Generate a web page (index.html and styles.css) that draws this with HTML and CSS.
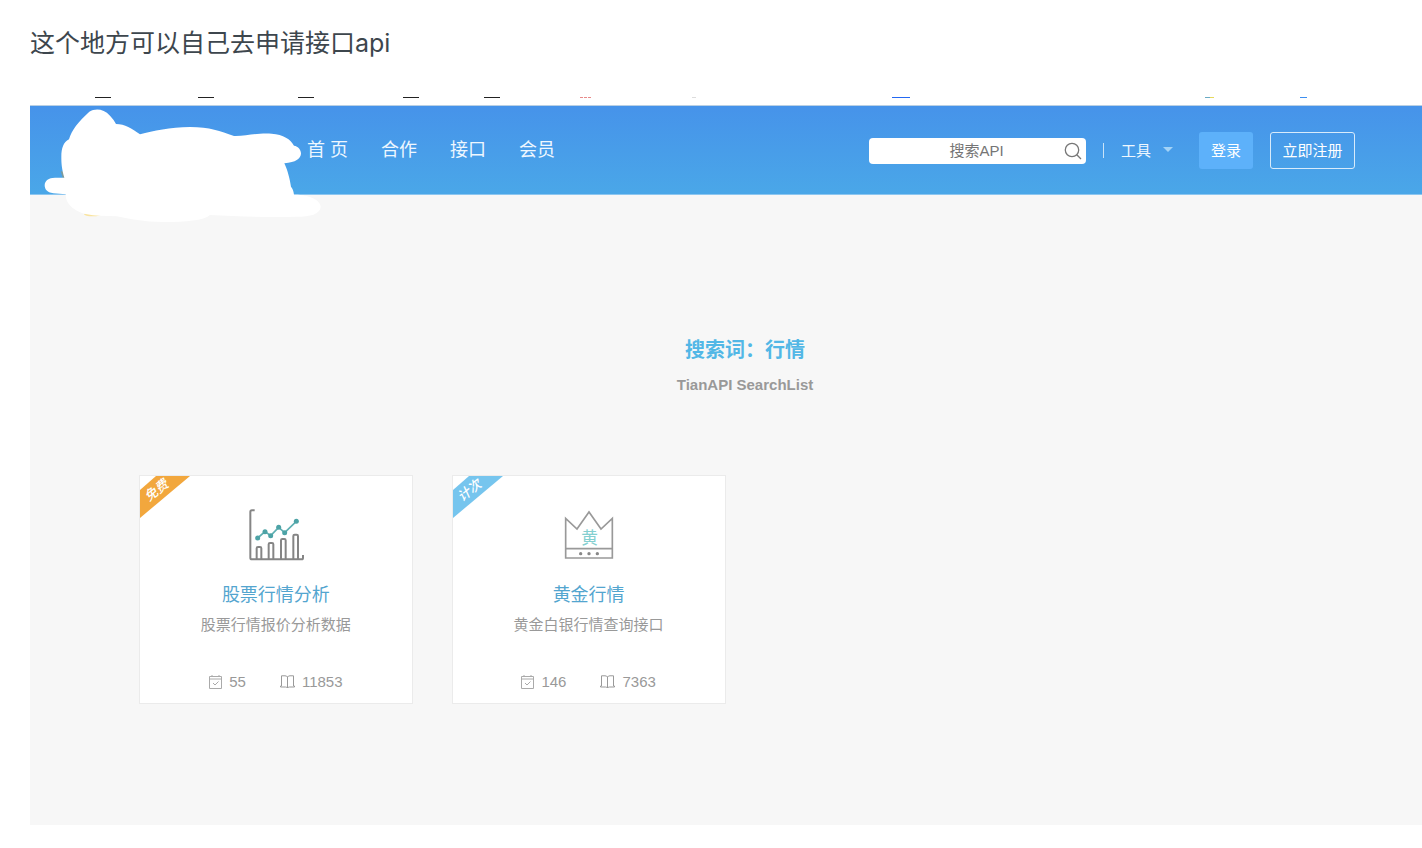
FILE: index.html
```html
<!DOCTYPE html>
<html lang="zh-CN">
<head>
<meta charset="utf-8">
<meta name="viewport" content="width=device-width, initial-scale=1">
<title>接口 API</title>
<link rel="stylesheet" href="styles.css">
</head>
<body>
<p class="intro">这个地方可以自己去申请接口api</p>
<div class="stage">
  <svg class="strip" aria-hidden="true">
    <g fill="#222"><rect x="65" width="16" height="1"/><rect x="168" width="16" height="1"/><rect x="268" width="16" height="1"/><rect x="373" width="16" height="1"/><rect x="454" width="16" height="1"/></g>
    <path d="M550 .5h11" stroke="#e88a8a" stroke-dasharray="3 1"/>
    <rect x="662" width="4" height="1" fill="#ddd"/>
    <rect x="862" width="18" height="1" fill="#2468f2"/>
    <rect x="1175" width="5" height="1" fill="#6aabc4"/><rect x="1180" width="4" height="1" fill="#e6d95c"/>
    <rect x="1270" width="7" height="1" fill="#3d8ff0"/>
  </svg>
  <header class="header">
    <nav class="nav">
      <a href="#">首 页</a>
      <a href="#">合作</a>
      <a href="#">接口</a>
      <a href="#">会员</a>
    </nav>
    <div class="actions">
      <form class="search" role="search">
        <input class="search-input" type="text" placeholder="搜索API" aria-label="搜索API">
        <button class="search-button" type="button" aria-label="搜索">
          <svg width="18" height="18" viewBox="0 0 18 18" fill="none" stroke="#777" stroke-width="1.3"><circle cx="8" cy="8" r="6.7"/><path d="M12.8 12.8L17 17"/></svg>
        </button>
      </form>
      <span class="divider"></span>
      <button class="tools" type="button" aria-haspopup="true">工具
        <svg width="10" height="5" viewBox="0 0 10 5" fill="#a3d3f7" aria-hidden="true"><path d="M0 0h10L5 5z"/></svg>
      </button>
      <button class="button login" type="button">登录</button>
      <button class="button register" type="button">立即注册</button>
    </div>
  </header>
  <svg class="blob" viewBox="0 0 960 450" aria-hidden="true">
    <ellipse cx="218" cy="388" rx="26" ry="6" fill="#f9e4a0"/>
    <path d="M122 258L134 262L134 280L128 278z" fill="#7d9a9a"/>
    <path fill="#fff" d="M147 163C155 135 175 110 208 80C225 70 250 70 270 92Q280 102 288 117C315 117 335 130 360 148C400 137 450 127 510 126C570 126 600 138 642 153C680 154 710 143 755 146C790 148 812 163 822 182C835 183 843 195 843 206C841 222 828 231 793 235C803 255 810 285 813 305Q820 312 822 329C865 328 902 345 902 365C900 388 870 395 830 395C740 398 650 394 570 390C550 407 500 411 430 411C370 411 330 402 290 394L240 392C210 391 190 387 172 378C150 366 137 350 137 328L100 325C80 322 74 312 74 300C76 285 85 279 105 278L133 278C125 250 124 235 124 215C124 190 130 172 147 163Z"/>
  </svg>
  <main class="main">
    <h1 class="heading">搜索词：行情</h1>
    <p class="subheading">TianAPI SearchList</p>
    <div class="cards">
      <article class="card">
        <svg class="ribbon" viewBox="0 0 51 42">
          <path d="M16 0H50L0 42V14z" fill="#f2a73d"/>
          <text class="ribbon-text" x="16" y="19" text-anchor="middle" transform="rotate(-39 16 14)">免费</text>
        </svg>
        <svg class="picture" viewBox="354 130 168 162" fill="none" aria-hidden="true">
          <g stroke="#858585" stroke-width="6"><path d="M374 137H366Q361 137 361 142V279Q361 284 366 284H515Q519 284 519 279V271"/><path d="M380 284V251Q380 247 384 247H390Q394 247 394 251V284M416 284V239Q416 235 420 235H426Q430 235 430 239V284M453 284V227Q453 223 457 223H463Q467 223 467 227V284M490 284V214Q490 210 494 210H500Q504 210 504 214V284"/></g>
          <path d="M383 220L405 201L422 213L446 188L464 204L499 170" stroke="#5fb0b3" stroke-width="5"/>
          <g fill="#4da3a6"><circle cx="383" cy="220" r="7.5"/><circle cx="405" cy="201" r="7.5"/><circle cx="422" cy="213" r="7.5"/><circle cx="446" cy="188" r="7.5"/><circle cx="464" cy="204" r="7.5"/><circle cx="499" cy="170" r="7.5"/></g>
        </svg>
        <h2 class="card-title"><a href="#">股票行情分析</a></h2>
        <p class="card-text">股票行情报价分析数据</p>
        <div class="stats">
          <span class="stat"><svg width="13" height="14" viewBox="0 0 13 14" fill="none" stroke="#aaa"><path d="M.5 1.5h12v12H.5zM.5 4h12M3 0v2M10 0v2M4 8l2 2 3.500-3.500"/></svg>55</span>
          <span class="stat"><svg width="15" height="14" viewBox="0 0 15 14" fill="none" stroke="#999"><path d="M7.500 2Q7 .8 5 .8H1.500V11H.5V12H5.500Q7 12 7.500 13Q8 12 9.500 12H14.500V11H13.500V.8H10Q8 .8 7.500 2V13"/></svg>11853</span>
        </div>
      </article>
      <article class="card">
        <svg class="ribbon" viewBox="0 0 51 42">
          <path d="M16 0H50L0 42V14z" fill="#76c5ee"/>
          <text class="ribbon-text" x="16" y="19" text-anchor="middle" transform="rotate(-39 16 14)">计次</text>
        </svg>
        <svg class="picture" viewBox="364 130 168 162" fill="none" aria-hidden="true">
          <path d="M378 280V161L412 193L448 142L484 193L518 161V280zM378 252H518" stroke="#999" stroke-width="5"/>
          <g fill="#888"><circle cx="423" cy="267" r="5"/><circle cx="448" cy="267" r="5"/><circle cx="473" cy="267" r="5"/></g>
          <text class="crown-text" x="450" y="237" text-anchor="middle">黄</text>
        </svg>
        <h2 class="card-title"><a href="#">黄金行情</a></h2>
        <p class="card-text">黄金白银行情查询接口</p>
        <div class="stats">
          <span class="stat"><svg width="13" height="14" viewBox="0 0 13 14" fill="none" stroke="#aaa"><path d="M.5 1.5h12v12H.5zM.5 4h12M3 0v2M10 0v2M4 8l2 2 3.500-3.500"/></svg>146</span>
          <span class="stat"><svg width="15" height="14" viewBox="0 0 15 14" fill="none" stroke="#999"><path d="M7.500 2Q7 .8 5 .8H1.500V11H.5V12H5.500Q7 12 7.500 13Q8 12 9.500 12H14.500V11H13.500V.8H10Q8 .8 7.500 2V13"/></svg>7363</span>
        </div>
      </article>
    </div>
  </main>
</div>
</body>
</html>
```

FILE: styles.css
```css
* { box-sizing: border-box; }

body {
  margin: 0;
  padding: 23px 0 23px 30px;
  background: #fff;
  font-family: "Liberation Sans", "Noto Sans CJK SC", sans-serif;
  font-size: 15px;
}

a { color: inherit; text-decoration: none; }
button, input { font: inherit; }
h1, h2, p { margin: 0; }

.intro {
  margin-bottom: 34px;
  color: #3d464d;
  font-family: Inter, "Noto Sans CJK SC", sans-serif;
  font-size: 25px;
  line-height: 40px;
}

.stage { position: relative; }

.strip {
  display: block;
  width: 100%;
  height: 9px;
  border-bottom: 1px solid #b9d0e4;
}

.header {
  display: flex;
  align-items: center;
  justify-content: space-between;
  padding: 26px 67px 25px 277px;
  background: linear-gradient(#4693ea, #4aa7e8);
  border-bottom: 1px solid #8cc6f0;
  color: #eef7ff;
}

.nav {
  display: flex;
  gap: 33px;
  padding-bottom: 2px;
  font-size: 18px;
  line-height: 26px;
}

.actions { display: flex; align-items: center; gap: 17px; }

.search {
  display: flex;
  align-items: center;
  width: 217px;
  height: 26px;
  padding-right: 4px;
  background: #fff;
  border-radius: 4px;
}

.search-input {
  flex: 1;
  min-width: 0;
  padding: 0 0 0 20px;
  border: 0;
  background: none;
  color: #757575;
  text-align: center;
}

.search-input::placeholder { color: #757575; }

.search-button {
  display: flex;
  padding: 0;
  border: 0;
  background: none;
}

.divider { width: 1px; height: 15px; background: #c9e3f8; }

.tools {
  display: flex;
  align-items: center;
  gap: 12px;
  margin-right: 9px;
  padding: 0 0 2px;
  border: 0;
  background: none;
  color: inherit;
}

.button {
  height: 37px;
  padding: 0 11px 2px;
  border: 1px solid transparent;
  border-radius: 3px;
  color: #fff;
}

.login { background: #5db1fa; }
.register { min-width: 85px; background: none; border-color: #d8ebfb; }

.blob {
  position: absolute;
  top: -12px;
  left: -10px;
  width: 320px;
  height: 150px;
  pointer-events: none;
}

.main {
  padding: 140px 71px 121px 109px;
  background: #f7f7f7;
  text-align: center;
}

.heading { color: #52b7e6; font-size: 20px; line-height: 30px; }

.subheading {
  margin-top: 10px;
  color: #999;
  font-weight: bold;
  line-height: 20px;
}

.cards {
  display: grid;
  grid-template-columns: repeat(4, 1fr);
  gap: 39px;
  margin-top: 80px;
}

.card {
  position: relative;
  padding: 32px 10px 11px;
  border: 1px solid #ebebeb;
  background: #fff;
  color: #999;
}

.ribbon { position: absolute; top: 0; left: 0; width: 51px; height: 42px; }
.ribbon-text { fill: #fff; font-size: 13px; font-style: italic; font-weight: 500; }

.picture { display: block; width: 56px; height: 54px; margin: 0 auto 20px; }
.crown-text { fill: #84cfd0; font-size: 50px; }

.card-title {
  color: #53a5cf;
  font-size: 18px;
  font-weight: normal;
  line-height: 26px;
}

.card-text { margin-top: 6px; line-height: 22px; }

.stats {
  display: flex;
  justify-content: center;
  gap: 34px;
  margin-top: 36px;
  line-height: 20px;
}

.stat { display: flex; align-items: center; gap: 7px; }
```
